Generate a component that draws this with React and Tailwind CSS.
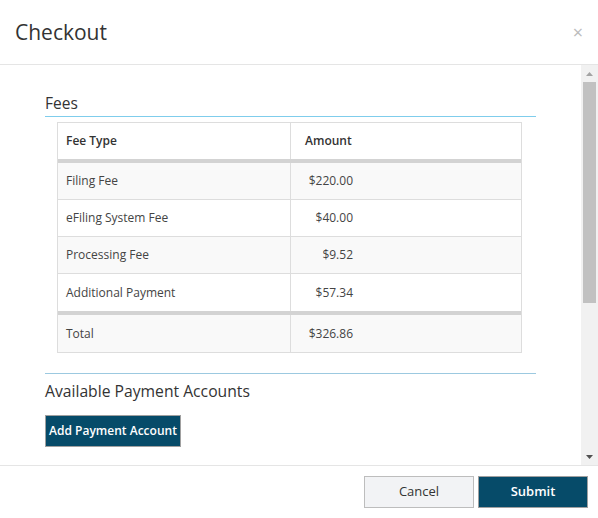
import React from "react";

const rows = [
  ["Filing Fee", "$220.00", true],
  ["eFiling System Fee", "$40.00", false],
  ["Processing Fee", "$9.52", true],
  ["Additional Payment", "$57.34", false],
];

export default function App() {
  return (
    <div
      className="w-[598px] h-[518px] bg-white flex flex-col overflow-hidden text-[#333]"
      style={{ fontFamily: '"Open Sans", "Noto Sans", sans-serif' }}
    >
      {/* Header */}
      <div className="h-[65px] shrink-0 border-b border-[#e5e5e5] flex items-center justify-between pl-[15px] pr-[15px]">
        <div className="text-[21px] leading-[24px] text-[#333]">Checkout</div>
        <div className="text-[18px] leading-none text-[#bbb]">×</div>
      </div>

      {/* Body */}
      <div className="h-[400px] shrink-0 flex overflow-hidden">
        <div className="flex-1 pl-[45px] pr-[45px] pt-[28px]">
          <div className="text-[15.5px] leading-[20px] pb-[3px] text-[#333] border-b border-[#7fcdec]">Fees</div>
          <div className="ml-[12px] mr-[14px] mt-[5px] border border-[#dddddd] text-[12px] text-[#444]">
            <div className="flex h-[40px] border-b-4 border-[#d3d3d3] font-semibold text-[#333]">
              <div className="w-[233px] border-r border-[#dddddd] pl-[8px] flex items-center">Fee Type</div>
              <div className="flex-1 pl-[14px] flex items-center">Amount</div>
            </div>
            {rows.map(([name, amt, shaded], i) => (
              <div
                key={name}
                className={
                  "flex " +
                  (shaded ? "bg-[#f9f9f9] " : "bg-white ") +
                  (i === rows.length - 1
                    ? "h-[41px] border-b-4 border-[#d3d3d3]"
                    : "h-[37px] border-b border-[#dddddd]")
                }
              >
                <div className="w-[233px] border-r border-[#dddddd] pl-[8px] flex items-center">{name}</div>
                <div className="flex-1 pl-[15px] flex items-center">
                  <span className="w-[47px] text-right">{amt}</span>
                </div>
              </div>
            ))}
            <div className="flex h-[37px] bg-[#f9f9f9]">
              <div className="w-[233px] border-r border-[#dddddd] pl-[8px] flex items-center">Total</div>
              <div className="flex-1 pl-[15px] flex items-center">
                <span className="w-[47px] text-right">$326.86</span>
              </div>
            </div>
          </div>

          <div className="mt-[20px] border-t border-[#9cc9e0] pt-[7px]">
            <div className="text-[15.7px] leading-[21px] text-[#333]">Available Payment Accounts</div>
            <button className="mt-[13px] h-[32px] w-[136px] bg-[#064b69] border border-[#a0a0a0] text-white text-[12px] font-semibold">
              Add Payment Account
            </button>
          </div>
        </div>

        {/* Scrollbar */}
        <div className="w-[17px] shrink-0 bg-[#f1f1f1] flex flex-col items-center">
          <div className="h-[17px] w-full flex items-center justify-center">
            <svg width="7" height="4" viewBox="0 0 7 4"><path d="M0 4 L3.5 0 L7 4 Z" fill="#a3a3a3" /></svg>
          </div>
          <div className="w-[13px] h-[221px] bg-[#c1c1c1]" />
          <div className="flex-1" />
          <div className="h-[17px] w-full flex items-center justify-center">
            <svg width="7" height="4" viewBox="0 0 7 4"><path d="M0 0 L7 0 L3.5 4 Z" fill="#505050" /></svg>
          </div>
        </div>
      </div>

      {/* Footer */}
      <div className="flex-1 border-t border-[#e5e5e5] flex justify-end items-start gap-[4px] pt-[10px] pr-[10px]">
        <button className="w-[110px] h-[32px] bg-[#f2f3f5] border border-[#bdbdbd] text-[13px] text-[#333]">
          Cancel
        </button>
        <button className="w-[110px] h-[32px] bg-[#064b69] border border-[#a0a0a0] text-[13px] text-white font-semibold">
          Submit
        </button>
      </div>
    </div>
  );
}
